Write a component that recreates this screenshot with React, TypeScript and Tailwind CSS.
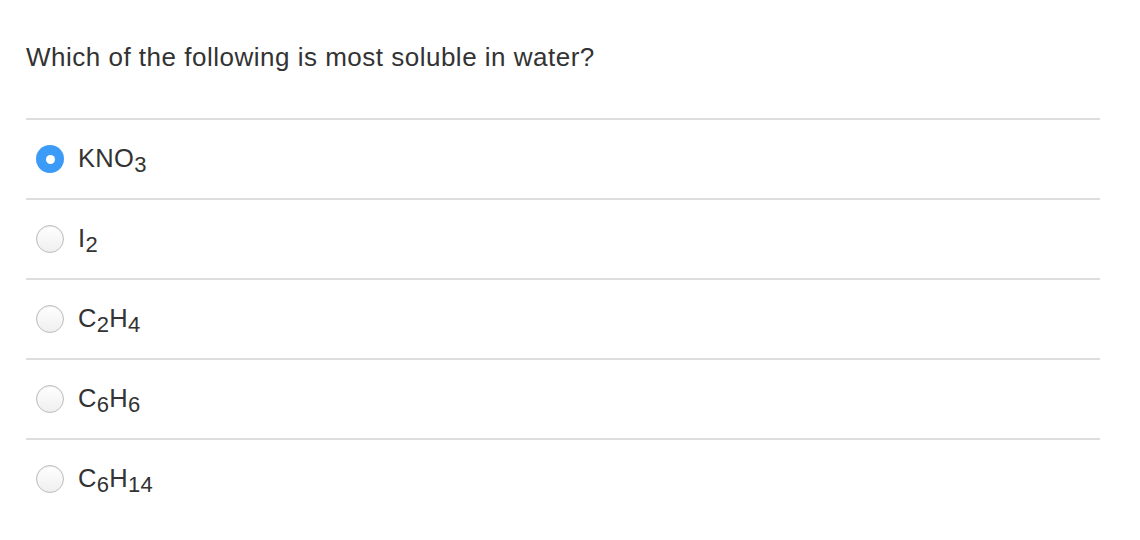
import React, { useState } from 'react';

type Option = { id: string; base: [string, string?][] };

// each option is a list of [text, subscript] pieces
const options: Option[] = [
  { id: 'kno3', base: [['KNO', '3']] },
  { id: 'i2', base: [['I', '2']] },
  { id: 'c2h4', base: [['C', '2'], ['H', '4']] },
  { id: 'c6h6', base: [['C', '6'], ['H', '6']] },
  { id: 'c6h14', base: [['C', '6'], ['H', '14']] },
];

function Radio({ checked }: { checked: boolean }) {
  if (checked) {
    return (
      <span className="flex h-[28px] w-[28px] shrink-0 items-center justify-center rounded-full bg-[#3d9bf8]">
        <span className="h-[9px] w-[9px] rounded-full bg-white" />
      </span>
    );
  }
  return (
    <span className="h-[28px] w-[28px] shrink-0 rounded-full border border-[#bdbdbd] bg-gradient-to-b from-white to-[#efefef] shadow-[inset_0_1px_1px_rgba(0,0,0,0.08)]" />
  );
}

export default function App() {
  const [selected, setSelected] = useState('kno3');

  return (
    <div className="min-h-screen w-[1140px] bg-white font-['Liberation_Sans',Arial,sans-serif] text-[#333333]">
      <div className="pl-[26px] pr-[40px] pt-[40px]">
        <h1 className="text-[26px] leading-[34px] tracking-[0.5px]">Which of the following is most soluble in water?</h1>

        <div className="mt-[44px]">
          {options.map((opt) => (
            <div key={opt.id} className="border-t-2 border-[#dddddd]">
              <label
                className="flex h-[78px] cursor-pointer items-center gap-[14px] pl-[10px]"
                onClick={() => setSelected(opt.id)}
              >
                <Radio checked={selected === opt.id} />
                <span className="text-[25.5px] leading-none tracking-[0.3px]">
                  {opt.base.map(([t, sub], j) => (
                    <React.Fragment key={j}>
                      {t}
                      {sub && <span className="relative top-[5px] text-[22px]">{sub}</span>}
                    </React.Fragment>
                  ))}
                </span>
              </label>
            </div>
          ))}
        </div>
      </div>
    </div>
  );
}
